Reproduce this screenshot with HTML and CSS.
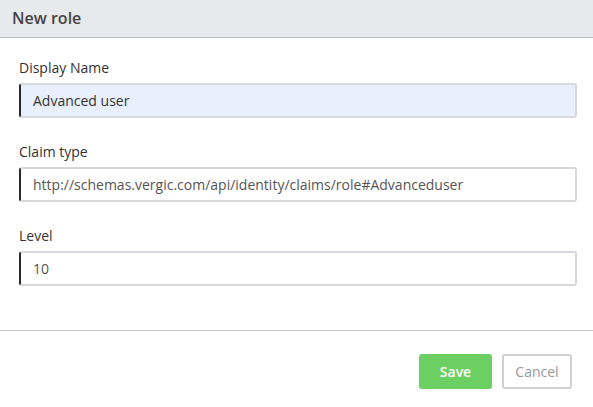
FILE: index.html
```html
<!DOCTYPE html>
<html>
<head>
<meta charset="utf-8">
<link rel="stylesheet" href="styles.css">
</head>
<body>
<div class="dialog">
  <div class="header">New role</div>
  <div class="body">
    <div class="field">
      <label class="label">Display Name</label>
      <div class="input filled">Advanced user</div>
    </div>
    <div class="field">
      <label class="label">Claim type</label>
      <div class="input">http://schemas.vergic.com/api/identity/claims/role#Advanceduser</div>
    </div>
    <div class="field">
      <label class="label">Level</label>
      <div class="input">10</div>
    </div>
  </div>
  <div class="footer">
    <button class="btn save">Save</button>
    <button class="btn cancel">Cancel</button>
  </div>
</div>
</body>
</html>
```
FILE: styles.css
```css
* { box-sizing: border-box; }
html, body { margin: 0; padding: 0; background: #fff; }
body { font-family: "Open Sans", "Liberation Sans", sans-serif; color: #333; }
.dialog { width: 593px; height: 407px; }
.header {
  height: 38px;
  background: #e8e9ec;
  border-bottom: 1px solid #bcbdc0;
  padding: 0 12px;
  font-size: 16px;
  line-height: 36px;
  font-weight: 600;
  color: #444;
}
.body { padding: 20px 16px 44px 19px; display: flex; flex-direction: column; gap: 24px; border-bottom: 1px solid #c8c8c8; }
.field { display: flex; flex-direction: column; gap: 5px; }
.label { font-size: 14px; color: #333; line-height: 20px; height: 20px; }
.input {
  height: 35px;
  border: 2px solid #d6d8dc;
  border-left: 2px solid #2a2a2a;
  border-radius: 3px;
  padding: 0 12px;
  font-size: 14px;
  line-height: 31px;
  color: #555;
  background: #fff;
  white-space: nowrap;
  overflow: hidden;
}
.input.filled { background: #e8f0fe; color: #333; }
.footer { display: flex; justify-content: flex-end; gap: 10px; padding: 23px 21px 0 0; }
.btn {
  height: 35px;
  border-radius: 3px;
  font-family: inherit;
  font-size: 14px;
  padding: 0;
}
.save { width: 73px; background: #6ccf62; border: none; color: #fff; font-weight: 600; }
.cancel { width: 70px; background: #fff; border: 2px solid #d0d0d0; color: #999; }
```
